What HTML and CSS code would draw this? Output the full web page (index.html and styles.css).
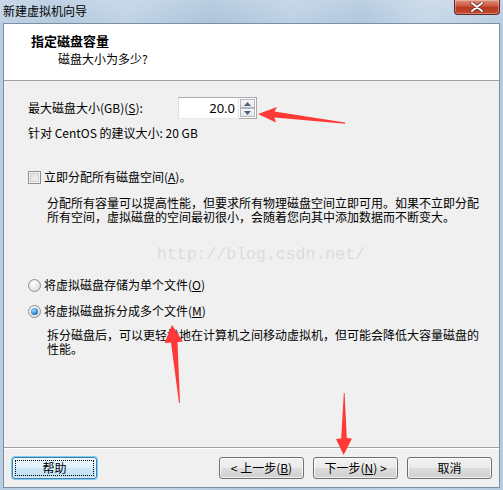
FILE: index.html
```html
<!DOCTYPE html>
<html lang="zh-CN">
<head>
<meta charset="utf-8">
<title>新建虚拟机向导</title>
<link rel="stylesheet" href="styles.css">
</head>
<body>
<div class="window">
  <div class="titlebar">
    <span class="title">新建虚拟机向导</span>
    <div class="close">
      <svg width="14" height="10" viewBox="0 0 14 10"><path d="M2 1 L12 9 M12 1 L2 9" stroke="#5a2a24" stroke-width="3.4" stroke-linecap="round"/><path d="M2 1 L12 9 M12 1 L2 9" stroke="#ffffff" stroke-width="2" stroke-linecap="round"/></svg>
    </div>
  </div>
  <div class="client">
    <div class="header">
      <div class="h-title">指定磁盘容量</div>
      <div class="h-sub">磁盘大小为多少?</div>
    </div>
    <div class="content">
      <div class="size-row">
        <span class="size-label">最大磁盘大小(GB)(<u>S</u>):</span>
        <div class="spin">
          <span class="spin-value">20.0</span>
          <div class="spin-btns">
            <span class="spin-btn"><svg width="7" height="4" viewBox="0 0 7 4"><path d="M0 4 L3.5 0 L7 4 Z" fill="#4d6185"/></svg></span>
            <span class="spin-btn"><svg width="7" height="4" viewBox="0 0 7 4"><path d="M0 0 L7 0 L3.5 4 Z" fill="#4d6185"/></svg></span>
          </div>
        </div>
      </div>
      <div class="hint">针对 CentOS 的建议大小: 20 GB</div>
      <div class="check-row"><span class="checkbox"></span><span>立即分配所有磁盘空间(<u>A</u>)。</span></div>
      <p class="desc">分配所有容量可以提高性能，但要求所有物理磁盘空间立即可用。如果不立即分配<br>所有空间，虚拟磁盘的空间最初很小，会随着您向其中添加数据而不断变大。</p>
      <div class="radio-row first"><span class="radio"></span><span>将虚拟磁盘存储为单个文件(<u>O</u>)</span></div>
      <div class="radio-row"><span class="radio checked"></span><span>将虚拟磁盘拆分成多个文件(<u>M</u>)</span></div>
      <p class="desc second">拆分磁盘后，可以更轻松地在计算机之间移动虚拟机，但可能会降低大容量磁盘的<br>性能。</p>
      <div class="watermark">http://blog.csdn.net/</div>
    </div>
    <div class="footer">
      <button class="btn help"><span class="focus">帮助</span></button>
      <div class="spacer"></div>
      <button class="btn">&lt; 上一步(<u>B</u>)</button>
      <button class="btn">下一步(<u>N</u>) &gt;</button>
      <button class="btn">取消</button>
    </div>
  </div>
  <svg class="arrows" width="503" height="490" viewBox="0 0 503 490">
    <polygon fill="#ff3838" points="258,114 277,107 274.5,111.5 345,122.5 345,123.8 274.5,117.5 276,122.5"/>
    <polygon fill="#ff3838" points="172,325 183,341.5 177.5,342 180,403 179,403 171,342.5 164.5,343"/>
    <polygon fill="#ff3838" points="343.8,393 344.6,393 346.8,438 352,438.5 343.6,455 336,439 341.2,438.5"/>
  </svg>
</div>
</body>
</html>
```

FILE: styles.css
```css
* { box-sizing: border-box; }
html, body { margin: 0; padding: 0; }
body {
  width: 503px;
  height: 490px;
  overflow: hidden;
  font-family: "Noto Sans CJK SC", "Noto Sans", sans-serif;
  font-size: 12px;
  color: #000;
}
u { text-decoration: underline; text-underline-offset: 1px; }

.window {
  position: relative;
  width: 503px;
  height: 490px;
  padding: 0 3px 2px 3px;
  background: linear-gradient(90deg, #b9cde2 0%, #c3d4e6 30%, #aec5dc 55%, #c0d2e5 80%, #b7cbe0 100%);
  display: flex;
  flex-direction: column;
}

.titlebar {
  height: 23px;
  margin: 0 -3px;
  display: flex;
  align-items: flex-start;
  background:
    linear-gradient(180deg, rgba(255,255,255,0.2) 0%, rgba(255,255,255,0.05) 100%),
    linear-gradient(90deg, #bcd0e4 0%, #b0c6dc 12%, #bcd0e4 25%, #a9c1d9 42%, #b9cde2 58%, #adc4dc 72%, #c3d5e7 85%, #b6cbe0 100%);
}
.title {
  padding-left: 3px;
  line-height: 21px;
  font-size: 12px;
  color: #000;
}
.close {
  margin-left: auto;
  margin-right: 3px;
  width: 46px;
  height: 15px;
  border: 1px solid #5d2b24;
  border-top: none;
  border-radius: 0 0 4px 4px;
  background: linear-gradient(180deg, #e0907f 0%, #cf5b45 40%, #b8391f 55%, #c44a30 100%);
  display: flex;
  align-items: center;
  justify-content: center;
  box-shadow: inset 0 0 0 1px rgba(255,255,255,0.3);
}

.client {
  flex: 1;
  display: flex;
  flex-direction: column;
  border: 1px solid #7d8fa3;
  background: #f0f0f0;
}

.header {
  height: 57px;
  background: #fff;
  border-bottom: 1px solid #a0a0a0;
  padding: 9px 0 0 27px;
}
.h-title {
  font-size: 13px;
  font-weight: bold;
  line-height: 16px;
}
.h-sub {
  margin-top: 2px;
  padding-left: 27px;
  line-height: 16px;
}

.content {
  position: relative;
  height: 366px;
  padding: 16px 0 0 24px;
}
.size-row {
  display: flex;
  align-items: center;
  height: 22px;
}
.size-label {
  width: 150px;
  line-height: 16px;
}
.spin {
  display: flex;
  height: 22px;
  width: 79px;
}
.spin-value {
  width: 61px;
  height: 22px;
  border: 1px solid #abadb3;
  border-color: #abadb3 #e2e3ea #e3e9ef #dbdfe6;
  background: #fff;
  text-align: right;
  padding-right: 3px;
  line-height: 20px;
  font-size: 13px;
  font-family: "Noto Sans", sans-serif;
}
.spin-btns {
  width: 18px;
  display: flex;
  flex-direction: column;
  border: 1px solid #a9a9a9;
  border-left: none;
  background: #fff;
  padding: 1px;
}
.spin-btn {
  flex: 1;
  display: flex;
  align-items: center;
  justify-content: center;
  border: 1px solid #b3b8c0;
  background: linear-gradient(180deg, #f6f6f6 0%, #e6e6e6 100%);
}
.hint {
  margin-top: 6px;
  line-height: 16px;
}

.check-row, .radio-row {
  display: flex;
  align-items: center;
  gap: 3px;
  line-height: 16px;
  height: 16px;
}
.check-row { margin-top: 28px; }
.checkbox {
  width: 13px;
  height: 13px;
  border: 1px solid #8f8f8f;
  background: linear-gradient(135deg, #dcdcdc 0%, #f6f6f6 100%);
  box-shadow: inset 0 0 0 1px #f4f4f4, inset 0 0 0 2px #cfcfcf;
}
.desc {
  margin: 11px 0 0 19px;
  line-height: 14px;
}
.desc.second { margin-top: 9px; }

.radio-row.first { margin-top: 53px; }
.radio-row + .radio-row { margin-top: 10px; }
.radio {
  width: 13px;
  height: 13px;
  border-radius: 50%;
  border: 1px solid #8e8f8f;
  background: radial-gradient(circle at 40% 35%, #ffffff 0%, #e8e8e8 55%, #cfcfcf 100%);
  position: relative;
}
.radio.checked::after {
  content: "";
  position: absolute;
  left: 2px;
  top: 2px;
  width: 7px;
  height: 7px;
  border-radius: 50%;
  background: radial-gradient(circle at 40% 35%, #a6e0ff 0%, #2a8ad4 55%, #0d4e8e 100%);
}

.watermark {
  position: absolute;
  left: 153px;
  top: 164px;
  font-family: "Liberation Mono", monospace;
  font-size: 16.5px;
  line-height: 20px;
  color: #dcdcdc;
}

.footer {
  flex: 1;
  border-top: 1px solid #a0a0a0;
  display: flex;
  align-items: flex-start;
  gap: 9px;
  padding: 9px 7px 0 8px;
  box-shadow: inset 0 1px 0 #ffffff;
}
.spacer { flex: 1; }
.btn {
  width: 85px;
  height: 22px;
  padding: 0;
  font-family: "Noto Sans CJK SC", "Noto Sans", sans-serif;
  font-size: 12px;
  line-height: 18px;
  color: #000;
  border: 1px solid #707070;
  border-radius: 3px;
  background: linear-gradient(180deg, #f2f2f2 0%, #ebebeb 48%, #dddddd 52%, #cfcfcf 100%);
  box-shadow: inset 0 0 0 1px rgba(255,255,255,0.7);
}
.btn.help {
  border-color: #3c7fb1;
  background: linear-gradient(180deg, #eef8fe 0%, #e0f2fc 48%, #cde9f8 52%, #bfe0f3 100%);
  box-shadow: 0 0 0 1px #7fcdf2, inset 0 0 0 1px rgba(255,255,255,0.5);
  padding: 2px;
}
.focus {
  display: block;
  height: 16px;
  line-height: 14px;
  border: 1px dotted #000;
}

.arrows {
  position: absolute;
  left: 0;
  top: 0;
  pointer-events: none;
}
```
